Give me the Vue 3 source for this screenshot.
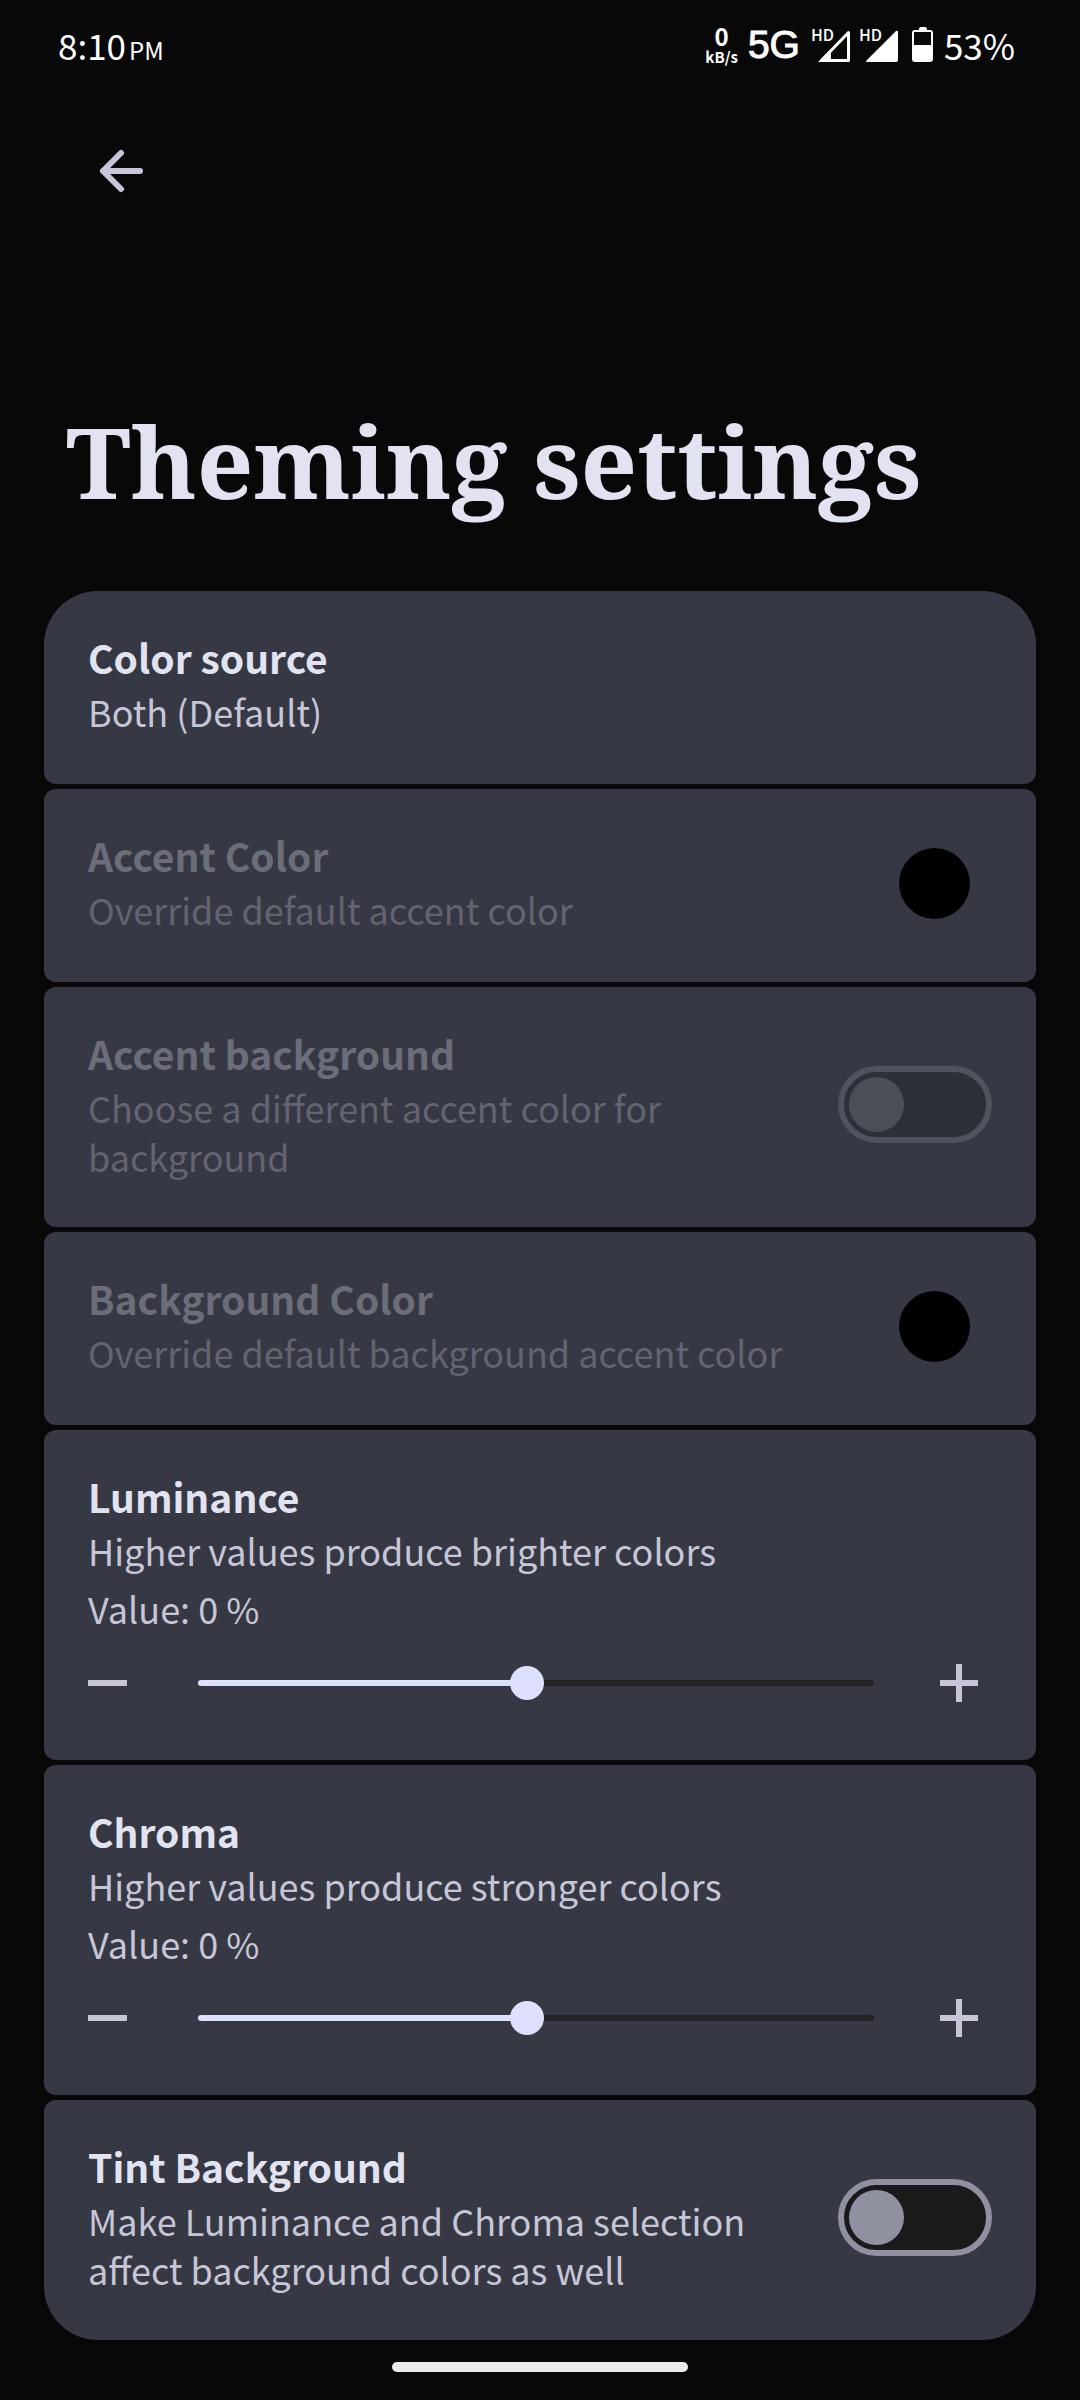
<script setup>
import { reactive } from 'vue'

const items = reactive([
  { id: 'source', kind: 'choice', title: 'Color source', text: 'Both (Default)' },
  { id: 'accent', kind: 'color', title: 'Accent Color', text: 'Override default accent color', color: '#000000', disabled: true },
  { id: 'accent-bg', kind: 'switch', title: 'Accent background', text: 'Choose a different accent color for background', on: false, disabled: true },
  { id: 'background', kind: 'color', title: 'Background Color', text: 'Override default background accent color', color: '#000000', disabled: true },
  { id: 'luminance', kind: 'slider', title: 'Luminance', text: 'Higher values produce brighter colors', value: 0 },
  { id: 'chroma', kind: 'slider', title: 'Chroma', text: 'Higher values produce stronger colors', value: 0 },
  { id: 'tint', kind: 'switch', title: 'Tint Background', text: 'Make Luminance and Chroma selection affect background colors as well', on: false }
])

const MIN = -17
const MAX = 18

function step(item, by) {
  item.value = Math.min(MAX, Math.max(MIN, item.value + by))
}

function fill(value) {
  return ((value - MIN) / (MAX - MIN)) * 100 + '%'
}
</script>

<template>
  <div class="screen">
    <header class="status">
      <div class="clock">8:10<span class="meridiem">PM</span></div>
      <div class="indicators">
        <div class="speed"><span class="rate">0</span><span class="unit">kB/s</span></div>
        <span class="network">5G</span>
        <svg class="signal" width="40" height="40" viewBox="0 0 40 40" aria-hidden="true">
          <path d="M36.500 7.500V35.500H9.500Z" fill="none" stroke="#fff" stroke-width="3" stroke-linejoin="round" />
          <path d="M6 37L19 24V37Z" fill="#fff" />
          <text x="-1" y="16" class="hd">HD</text>
        </svg>
        <svg class="signal" width="40" height="40" viewBox="0 0 40 40" aria-hidden="true">
          <path d="M36 6Q38 5 38 7V35Q38 37 36 37H7Q5 37 7 35Z" fill="#fff" />
          <text x="-1" y="16" class="hd">HD</text>
        </svg>
        <svg class="battery" width="22" height="40" viewBox="0 0 22 40" aria-hidden="true">
          <path d="M7 5V4Q7 2 9 2H13Q15 2 15 4V5H18Q21 5 21 8V34Q21 37 18 37H3Q0 37 0 34V8Q0 5 3 5ZM2 7V20H19V7Z" fill="#fff" fill-rule="evenodd" />
        </svg>
        <span>53%</span>
      </div>
    </header>

    <nav class="toolbar">
      <button class="back" type="button" aria-label="Back">
        <svg width="50" height="50" viewBox="0 0 50 50" aria-hidden="true">
          <path d="M25 7L7 25L25 43M7 25H44" fill="none" stroke="#c6c6d8" stroke-width="6" stroke-linecap="round" stroke-linejoin="round" />
        </svg>
      </button>
    </nav>

    <h1>Theming settings</h1>

    <main class="cards">
      <section v-for="item in items" :key="item.id" class="card" :class="{ disabled: item.disabled }">
        <button v-if="item.kind === 'choice'" type="button" class="info">
          <span class="title">{{ item.title }}</span>
          <span class="text">{{ item.text }}</span>
        </button>
        <label v-else class="info" :for="item.id">
          <span class="title">{{ item.title }}</span>
          <span class="text">{{ item.text }}</span>
        </label>

        <input v-if="item.kind === 'color'" :id="item.id" v-model="item.color" class="swatch" type="color" :disabled="item.disabled" />
        <input v-if="item.kind === 'switch'" :id="item.id" v-model="item.on" class="switch" type="checkbox" role="switch" :disabled="item.disabled" />

        <div v-if="item.kind === 'slider'" class="adjust">
          <output class="text" :for="item.id">Value: {{ item.value }} %</output>
          <div class="row">
            <button type="button" class="step" :aria-label="'Decrease ' + item.title" @click="step(item, -1)">
              <svg width="66" height="60" viewBox="0 0 66 60" aria-hidden="true"><path d="M0 27H39V33H0Z" fill="#c6c6d8" /></svg>
            </button>
            <input :id="item.id" v-model.number="item.value" class="range" type="range" :min="MIN" :max="MAX" :style="{ '--fill': fill(item.value) }" />
            <button type="button" class="step" :aria-label="'Increase ' + item.title" @click="step(item, 1)">
              <svg width="66" height="60" viewBox="0 0 66 60" aria-hidden="true"><path d="M14 27H30V11H36V27H52V33H36V49H30V33H14Z" fill="#c6c6d8" /></svg>
            </button>
          </div>
        </div>
      </section>
    </main>

    <div class="home"></div>
  </div>
</template>

<style>
body {
  background: #080808;
}
</style>

<style scoped>
.screen {
  min-height: 100vh;
  box-sizing: border-box;
  display: flex;
  flex-direction: column;
  background: #080808;
  color: #e2e3f1;
  font-family: "Noto Sans CJK SC", "Noto Sans", sans-serif;
  font-size: 36px;
}

button {
  padding: 0;
  border: 0;
  background: none;
  color: inherit;
  font: inherit;
  text-align: left;
}

svg {
  display: block;
  overflow: visible;
}

.status {
  display: flex;
  justify-content: space-between;
  align-items: center;
  height: 88px;
  padding: 2px 65px 0 58px;
  box-sizing: border-box;
  color: #fff;
  font-size: 35px;
  line-height: 52px;
}

.meridiem {
  margin-left: 3px;
  font-size: 24px;
  line-height: 26px;
}

.indicators {
  display: flex;
  align-items: center;
}

.speed {
  display: flex;
  flex-direction: column;
  align-items: center;
  margin-right: 10px;
  font-weight: 700;
}

.rate {
  font-size: 24px;
  line-height: 24px;
}

.unit {
  font-size: 15px;
  line-height: 18px;
}

.network {
  margin-right: 12px;
  font-family: "Liberation Sans", Arial, sans-serif;
  font-size: 39px;
  -webkit-text-stroke: 1px #fff;
}

.signal {
  margin-right: 8px;
}

.hd {
  fill: #fff;
  font-size: 16px;
  font-weight: 500;
}

.battery {
  margin: 0 10px 0 4px;
}

.toolbar {
  height: 166px;
  padding: 0 96px;
  display: flex;
  align-items: center;
}

h1 {
  margin: 134px 66px 58px;
  font-family: "Noto Serif", "Liberation Serif", serif;
  font-size: 99px;
  font-weight: 700;
  line-height: 145px;
}

.cards {
  display: flex;
  flex-direction: column;
  gap: 5px;
  padding: 0 44px;
}

.card {
  display: flex;
  flex-wrap: wrap;
  align-items: center;
  box-sizing: border-box;
  min-height: 193px;
  padding: 0 44px 5px;
  border-radius: 12px;
  background: #363843;
}

.card:first-child {
  border-top-left-radius: 54px;
  border-top-right-radius: 54px;
}

.card:last-child {
  border-bottom-left-radius: 54px;
  border-bottom-right-radius: 54px;
}

.info {
  flex: 1;
  align-self: flex-start;
  padding: 36px 32px 41px 0;
}

.title {
  display: block;
  font-size: 39px;
  font-weight: 700;
  line-height: 60px;
}

.text {
  display: block;
  color: #c6c6d8;
  line-height: 49px;
}

.disabled .title {
  color: #6b6d79;
}

.disabled .text {
  color: #62646f;
}

.swatch {
  appearance: none;
  width: 71px;
  height: 71px;
  margin: 0 22px 0 0;
  padding: 0;
  border: 0;
  border-radius: 50%;
  background: #000;
  overflow: hidden;
}

.swatch::-webkit-color-swatch-wrapper {
  padding: 0;
}

.swatch::-webkit-color-swatch {
  border: 0;
}

.switch {
  appearance: none;
  display: flex;
  align-items: center;
  width: 154px;
  height: 77px;
  box-sizing: border-box;
  margin: 0;
  padding: 0 5px;
  border: 6px solid #8f91a1;
  border-radius: 39px;
  background: #1a1a1a;
}

.switch::before {
  content: "";
  width: 55px;
  height: 55px;
  border-radius: 50%;
  background: #8f91a1;
}

.switch:checked {
  justify-content: flex-end;
}

.switch:disabled {
  border-color: #50525e;
  background: #2e3038;
}

.switch:disabled::before {
  background: #4c4e57;
}

.adjust {
  flex: 0 0 100%;
  margin-top: -32px;
  padding-bottom: 42px;
}

.row {
  display: flex;
  align-items: center;
  gap: 44px;
  margin-top: 20px;
}

.range {
  appearance: none;
  flex: 1;
  min-width: 0;
  height: 60px;
  margin: 0 8px 0 0;
  background: none;
}

.range::-webkit-slider-runnable-track {
  height: 6px;
  border-radius: 3px;
  background: linear-gradient(to right, #dde0ff var(--fill), #242424 var(--fill));
}

.range::-webkit-slider-thumb {
  appearance: none;
  width: 34px;
  height: 34px;
  margin-top: -14px;
  border-radius: 50%;
  background: #dde0ff;
}

.home {
  width: 296px;
  height: 10px;
  margin: 22px auto 28px;
  border-radius: 5px;
  background: #ececec;
}
</style>
